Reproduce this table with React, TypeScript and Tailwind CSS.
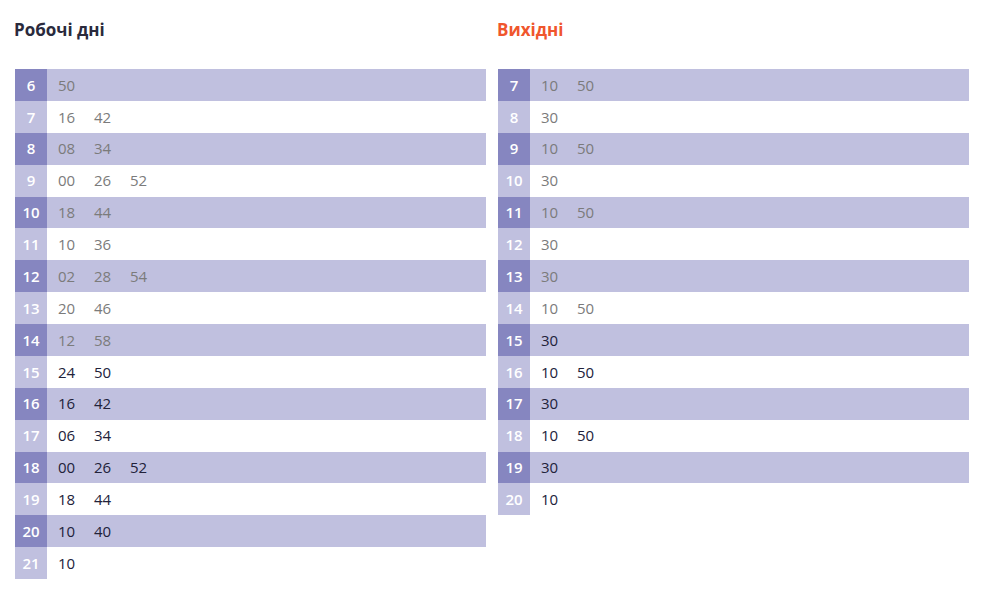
type Row = { hour: number; mins: string[]; past: boolean };

const weekdays: Row[] = [
  { hour: 6, mins: ["50"], past: true },
  { hour: 7, mins: ["16", "42"], past: true },
  { hour: 8, mins: ["08", "34"], past: true },
  { hour: 9, mins: ["00", "26", "52"], past: true },
  { hour: 10, mins: ["18", "44"], past: true },
  { hour: 11, mins: ["10", "36"], past: true },
  { hour: 12, mins: ["02", "28", "54"], past: true },
  { hour: 13, mins: ["20", "46"], past: true },
  { hour: 14, mins: ["12", "58"], past: true },
  { hour: 15, mins: ["24", "50"], past: false },
  { hour: 16, mins: ["16", "42"], past: false },
  { hour: 17, mins: ["06", "34"], past: false },
  { hour: 18, mins: ["00", "26", "52"], past: false },
  { hour: 19, mins: ["18", "44"], past: false },
  { hour: 20, mins: ["10", "40"], past: false },
  { hour: 21, mins: ["10"], past: false },
];

const weekends: Row[] = [
  { hour: 7, mins: ["10", "50"], past: true },
  { hour: 8, mins: ["30"], past: true },
  { hour: 9, mins: ["10", "50"], past: true },
  { hour: 10, mins: ["30"], past: true },
  { hour: 11, mins: ["10", "50"], past: true },
  { hour: 12, mins: ["30"], past: true },
  { hour: 13, mins: ["30"], past: true },
  { hour: 14, mins: ["10", "50"], past: true },
  { hour: 15, mins: ["30"], past: false },
  { hour: 16, mins: ["10", "50"], past: false },
  { hour: 17, mins: ["30"], past: false },
  { hour: 18, mins: ["10", "50"], past: false },
  { hour: 19, mins: ["30"], past: false },
  { hour: 20, mins: ["10"], past: false },
];

const Schedule = ({ title, rows, accent }: { title: string; rows: Row[]; accent?: boolean }) => {
  return (
    <div className="flex-1">
      <h2
        className={`-ml-px h-[24px] text-[17px] leading-[24px] font-bold mt-px ${
          accent ? "text-[#f0562d]" : "text-[#2a2a3c]"
        }`}
      >
        {title}
      </h2>
      <div className="mt-[27px]">
        {rows.map((row, i) => {
          const odd = i % 2 === 0;
          return (
            <div key={row.hour} className={`flex h-[31.875px] items-center ${odd ? "bg-[#c0c0df]" : ""}`}>
              <div
                className={`w-[32px] h-full flex items-center justify-center text-white font-semibold ${
                  odd ? "bg-[#8686c0]" : "bg-[#c0c0df]"
                }`}
              >
                {row.hour}
              </div>
              <div className={`flex pl-[11px] font-medium ${row.past ? "text-[#7b7b7b]" : "text-[#22223a]"}`}>
                {row.mins.map((m) => (
                  <span key={m} className="w-[36px]">
                    {m}
                  </span>
                ))}
              </div>
            </div>
          );
        })}
      </div>
    </div>
  );
};

export default function App() {
  return (
    <div
      className="bg-white w-[983px] h-[592px] pt-[17px] pl-[15px] pr-[14px] flex gap-[12px] text-[15px]"
      style={{ fontFamily: '"Open Sans", "Noto Sans", sans-serif' }}
    >
      <Schedule title="Робочі дні" rows={weekdays} />
      <Schedule title="Вихідні" rows={weekends} accent />
    </div>
  );
}
